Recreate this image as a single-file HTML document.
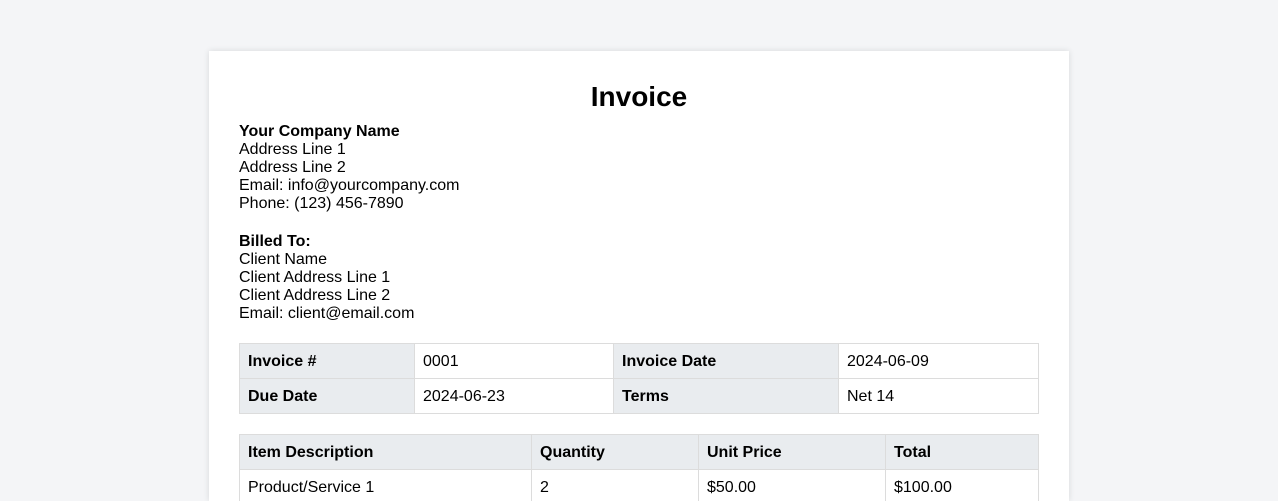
<!DOCTYPE html>
<html><head><style>
html,body{margin:0;width:1278px;height:501px;overflow:hidden}
body{background:#f4f5f7;font-family:"Liberation Sans",Arial,sans-serif;color:#000;position:relative}
.card{position:absolute;left:209px;top:51px;width:860px;height:450px;background:#fff;box-shadow:0 0 6px rgba(0,0,0,0.12)}
h1{position:absolute;left:0;width:860px;top:29px;margin:0;text-align:center;font-size:28px;font-weight:bold;line-height:34px}
.blk{position:absolute;left:30px;font-size:16px;line-height:18px}
table{position:absolute;left:30px;width:799px;border-collapse:collapse;table-layout:fixed;font-size:16px}
td{border:1px solid #dcdcdc;height:35px;padding:1px 8px 0;box-sizing:border-box}
.g{background:#e9ecef;font-weight:bold}
</style></head><body>
<div class="card">
<h1>Invoice</h1>
<div class="blk" style="top:72px"><b>Your Company Name</b><br>Address Line 1<br>Address Line 2<br>Email: info@yourcompany.com<br>Phone: (123) 456-7890</div>
<div class="blk" style="top:182px"><b>Billed To:</b><br>Client Name<br>Client Address Line 1<br>Client Address Line 2<br>Email: client@email.com</div>
<table style="top:292px"><colgroup><col style="width:175px"><col style="width:199px"><col style="width:225px"><col style="width:200px"></colgroup>
<tr><td class="g">Invoice #</td><td>0001</td><td class="g">Invoice Date</td><td>2024-06-09</td></tr>
<tr><td class="g">Due Date</td><td>2024-06-23</td><td class="g">Terms</td><td>Net 14</td></tr></table>
<table style="top:383px"><colgroup><col style="width:292px"><col style="width:167px"><col style="width:187px"><col style="width:153px"></colgroup>
<tr><td class="g">Item Description</td><td class="g">Quantity</td><td class="g">Unit Price</td><td class="g">Total</td></tr>
<tr><td>Product/Service 1</td><td>2</td><td>$50.00</td><td>$100.00</td></tr></table>
</div>
</body></html>
